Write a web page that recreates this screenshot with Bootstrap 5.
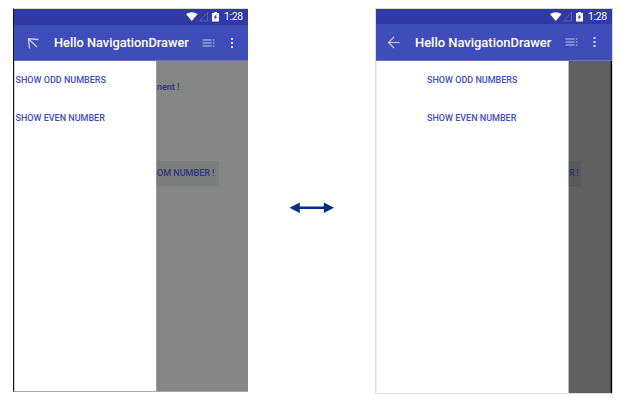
<!DOCTYPE html>
<html lang="en">
<head>
<meta charset="utf-8">
<meta name="viewport" content="width=device-width, initial-scale=1">
<title>Hello NavigationDrawer</title>
<link href="https://cdn.jsdelivr.net/npm/bootstrap@5.3.0/dist/css/bootstrap.min.css" rel="stylesheet">
<style>
body{width:626px;height:406px;overflow:hidden;background:#fff;font-family:Roboto,sans-serif;padding:8px 0 0 13px}
svg{display:block;flex:none}
.phone{width:235px;height:384px;border-left:1px solid #151518;border-top:1px solid #d9d9d6;border-bottom:1px solid #a4a4a4;flex:none}
.phone-b{width:238px;height:386px;margin-left:41px;border-left:1px solid #dedede;border-bottom:1px solid #dfdfdf;border-right:1px solid #d4d4d4}
.statusbar{height:16px;background:#303aa4;color:#fff;font-size:10.4px;line-height:16px;padding-right:6px}
.phone-b .statusbar{height:15px;line-height:15px}
.clock{width:18px;white-space:nowrap;letter-spacing:-.3px}
.toolbar{height:36px;background:#3f4dbb;color:#fff;border-bottom:1px solid #6670c4}
.phone-b .toolbar{height:37px}
.title-text{font-size:12.8px;font-weight:500;line-height:16px;width:148px;white-space:nowrap;padding-top:1px}
.phone-b .title-text{font-size:12.95px;width:150px}
.drawer{width:142px;background:#fff;border-left:1px solid #d0d0d0;flex:none;padding-top:9px}
.phone-b .drawer{width:192px;border-left:1px solid #eee}
.drawer-item{height:37.5px;padding:0 0 0 .5px;border:0;background:none;color:#3f4dc4;font-size:9px;font-weight:500;line-height:21px;white-space:nowrap;text-align:left;display:flex;align-items:flex-start}
.phone-b .drawer-item{padding-left:50px}
.page-area{background:#868686;border-left:1px solid #9a9a9a;color:#2b3480;font-size:9px;padding-top:18px;min-width:0}
.phone-b .page-area{background:#606060;border-left-color:#bcbcbc;border-right:1px solid #050505;color:#262f78;box-shadow:inset -1px 0 #424242}
.hello{height:16px;line-height:16px;white-space:nowrap;font-weight:500}
.random{height:24px;margin-top:66px;width:62px;background:#7c7e7e;border-radius:0 2px 2px 0;line-height:24px;font-weight:500;white-space:nowrap;text-align:right;padding-right:5px;box-shadow:0 1px 1px #7d7d7d}
.phone-b .random{width:12px;padding-right:4px;letter-spacing:-.3px;background:#595a5a;box-shadow:0 1px 1px #555}
.between{width:45px;margin-left:41px;padding-top:194px;flex:none}
</style>
</head>
<body>
<main class="d-flex align-items-start">
  <section class="phone d-flex flex-column">
    <div class="statusbar d-flex justify-content-end align-items-center">
      <svg width="38" height="12" viewBox="0 0 38 12"><path d="M0 2.900Q5.800-.5 11.600 2.900L5.800 10Z" fill="#fff"/><path d="M13.500 10H21.500V1.500Z" fill="none" stroke="#5962b4"/><path d="M26 2h2V1h3v1h2v8.500h-7Z" fill="#fff"/><path d="M30.800 3l-3.300 3.600h1.700L28 9l3.300-3.300h-1.600Z" fill="#303aa4"/></svg>
      <span class="clock">1:28</span>
    </div>
    <header class="toolbar d-flex align-items-center">
      <svg width="40" height="20" viewBox="0 0 40 20"><path d="M15.500 15.500L14.500 5.800L24.500 6.500M14.500 5.800L23 14" fill="none" stroke="#c5cae9" stroke-width="1.400"/></svg>
      <span class="title-text">Hello NavigationDrawer</span>
      <svg width="34" height="16" viewBox="0 0 34 16"><path d="M.5 5h9M.5 8h9M.5 11h9M10.800 5h1.600M10.800 8h1.600M10.800 11h1.600" stroke="#c5c9ea" stroke-width="1.200"/><path d="M29 3h2v2h-2ZM29 7h2v2h-2ZM29 11h2v2h-2Z" fill="#d8dbf0"/></svg>
    </header>
    <div class="d-flex flex-grow-1">
      <nav class="drawer"><button class="drawer-item">SHOW ODD NUMBERS</button><button class="drawer-item">SHOW EVEN NUMBER</button></nav>
      <div class="page-area flex-grow-1"><div class="hello">nent !</div><div class="random">OM NUMBER !</div></div>
    </div>
  </section>
  <div class="between">
    <svg width="45" height="12" viewBox="0 0 45 12"><path d="M.5 5.800L10.800.6v4h24v-4L45 5.800l-10.200 5.200V7h-24v4Z" fill="#002f7d"/></svg>
  </div>
  <section class="phone phone-b d-flex flex-column">
    <div class="statusbar d-flex justify-content-end align-items-center">
      <svg width="38" height="12" viewBox="0 0 38 12"><path d="M0 2.900Q5.800-.5 11.600 2.900L5.800 10Z" fill="#fff"/><path d="M13.500 10H21.500V1.500Z" fill="none" stroke="#5962b4"/><path d="M26 2h2V1h3v1h2v8.500h-7Z" fill="#fff"/><path d="M30.800 3l-3.300 3.600h1.700L28 9l3.300-3.300h-1.600Z" fill="#303aa4"/></svg>
      <span class="clock">1:28</span>
    </div>
    <header class="toolbar d-flex align-items-center">
      <svg width="39" height="20" viewBox="0 0 39 20"><path d="M23.500 10.500H12.500M18 5L12.500 10.500l5.500 5.500" fill="none" stroke="#c5cae9" stroke-width="1.200"/></svg>
      <span class="title-text">Hello NavigationDrawer</span>
      <svg width="34" height="16" viewBox="0 0 34 16"><path d="M.5 5h9M.5 8h9M.5 11h9M10.800 5h1.600M10.800 8h1.600M10.800 11h1.600" stroke="#c5c9ea" stroke-width="1.200"/><path d="M28.500 3h2v2h-2ZM28.500 7h2v2h-2ZM28.500 11h2v2h-2Z" fill="#d8dbf0"/></svg>
    </header>
    <div class="d-flex flex-grow-1">
      <nav class="drawer"><button class="drawer-item">SHOW ODD NUMBERS</button><button class="drawer-item">SHOW EVEN NUMBER</button></nav>
      <div class="page-area flex-grow-1"><div class="hello"></div><div class="random">R !</div></div>
    </div>
  </section>
</main>
<script src="https://cdn.jsdelivr.net/npm/bootstrap@5.3.0/dist/js/bootstrap.bundle.min.js"></script>
</body>
</html>
